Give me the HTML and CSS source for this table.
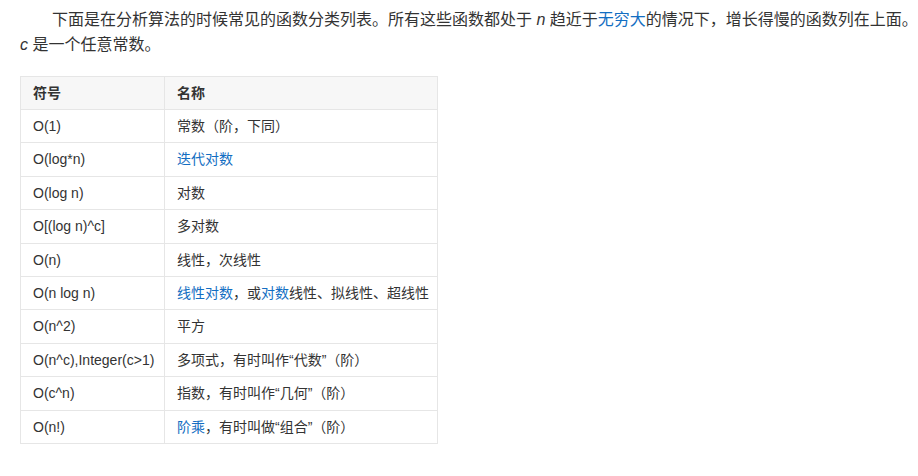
FILE: index.html
```html
<!DOCTYPE html>
<html lang="zh">
<head>
<meta charset="utf-8">
<link rel="stylesheet" href="styles.css">
</head>
<body>
<div class="content">
  <p class="intro">下面是在分析算法的时候常见的函数分类列表。所有这些函数都处于 <i class="var">n</i> 趋近于<a class="link">无穷大</a>的情况下，增长得慢的函数列在上面。<br><i class="var">c</i> 是一个任意常数。</p>
  <table class="table">
    <colgroup><col class="col-sym"><col class="col-name"></colgroup>
    <thead>
      <tr><th>符号</th><th>名称</th></tr>
    </thead>
    <tbody>
      <tr><td>O(1)</td><td>常数（阶，下同）</td></tr>
      <tr><td>O(log*n)</td><td><a class="link">迭代对数</a></td></tr>
      <tr><td>O(log n)</td><td>对数</td></tr>
      <tr><td>O[(log n)^c]</td><td>多对数</td></tr>
      <tr><td>O(n)</td><td>线性，次线性</td></tr>
      <tr><td>O(n log n)</td><td><a class="link">线性对数</a>，或<a class="link">对数</a>线性、拟线性、超线性</td></tr>
      <tr><td>O(n^2)</td><td>平方</td></tr>
      <tr><td>O(n^c),Integer(c&gt;1)</td><td>多项式，有时叫作“代数”（阶）</td></tr>
      <tr><td>O(c^n)</td><td>指数，有时叫作“几何”（阶）</td></tr>
      <tr><td>O(n!)</td><td><a class="link">阶乘</a>，有时叫做“组合”（阶）</td></tr>
    </tbody>
  </table>
</div>
</body>
</html>
```

FILE: styles.css
```css
html, body {
  margin: 0;
  padding: 0;
  background: #fff;
}
body {
  font-family: "Liberation Sans", Arial, "Noto Sans CJK SC", sans-serif;
  color: #333;
  text-spacing-trim: space-all;
}
.content {
  padding: 7px 0 0 20px;
}
.intro {
  margin: 0 0 19px 0;
  font-size: 16px;
  line-height: 25px;
  text-indent: 2em;
  white-space: nowrap;
}
.var {
  font-style: italic;
  font-family: "Liberation Sans", Arial, sans-serif;
}
.link {
  color: #136ec2;
  text-decoration: none;
  cursor: pointer;
}
.table {
  border-collapse: collapse;
  table-layout: fixed;
  width: 417px;
  font-size: 14px;
}
.col-sym {
  width: 144px;
}
.col-name {
  width: 273px;
}
.table th,
.table td {
  border: 1px solid #e6e6e6;
  padding: 6px 12px;
  line-height: 20.4px;
  text-align: left;
  vertical-align: middle;
  white-space: nowrap;
  overflow: visible;
}
.table th {
  background: #f7f7f7;
  font-weight: bold;
  line-height: 20px;
}
```
